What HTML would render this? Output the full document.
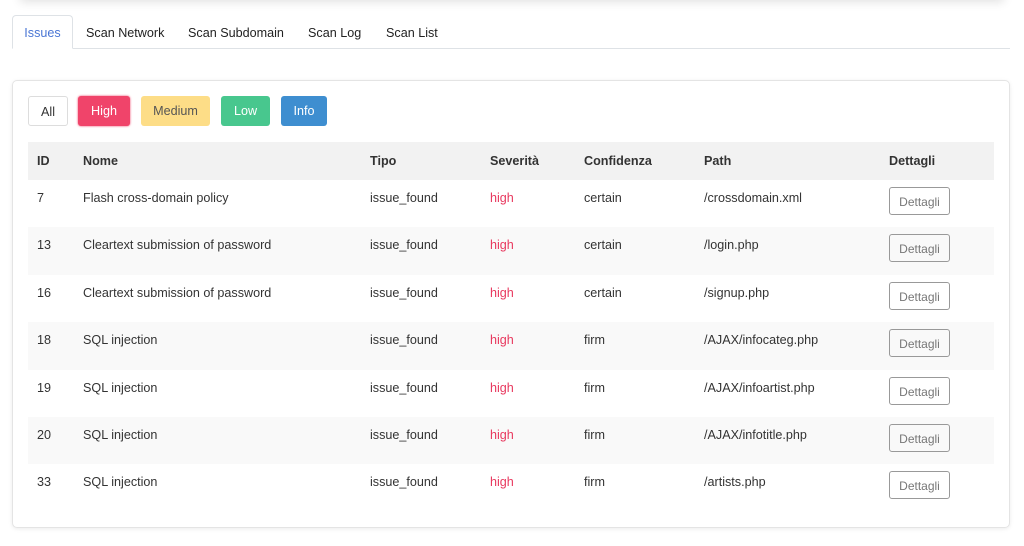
<!DOCTYPE html>
<html><head><meta charset="utf-8"><style>
body{margin:0;width:1024px;height:546px;background:#fff;font-family:"Liberation Sans",Arial,sans-serif;font-size:12.6px;color:#333;position:relative;overflow:hidden}
.topsh{position:absolute;left:20px;right:20px;top:-20px;height:20px;box-shadow:0 2px 10px rgba(0,0,0,.12)}
.tabs{position:absolute;left:12px;top:16px;width:998px;height:32px;border-bottom:1px solid #dee2e6}
.tab{position:absolute;top:1px;height:32px;line-height:32px;font-size:12.6px;color:#222}
.tab.act{left:0;width:59px;border:1px solid #dee2e6;border-bottom:1px solid #fff;border-radius:4px 4px 0 0;color:#4a76d4;text-align:center;background:#fff;height:32px;top:-1px;line-height:34px}
.card{position:absolute;left:12px;top:80px;width:996px;height:446px;border:1px solid #e4e4e4;border-radius:5px;box-shadow:0 1px 4px rgba(0,0,0,.08)}
.btn{position:absolute;top:15px;height:30px;line-height:30px;text-align:center;border-radius:3px;font-size:12.6px;box-sizing:border-box}
table{position:absolute;left:15px;top:61px;width:966px;border-collapse:collapse}
th{height:38px;background:#f2f2f2;text-align:left;font-weight:bold;padding:0;box-sizing:border-box;vertical-align:middle}
td{height:47.4px;padding:0;vertical-align:top;padding-top:11px;box-sizing:border-box}
tr.s td{background:#f9f9f9}
.h{color:#e8385e}
.d{display:inline-block;width:61px;height:28px;line-height:28px;text-align:center;border:1px solid #999;border-radius:3px;color:#777;margin-top:-4px;box-sizing:border-box;font-size:12px}
</style></head><body>
<div class="topsh"></div>
<div class="tabs">
<div class="tab act">Issues</div>
<div class="tab" style="left:74px">Scan Network</div>
<div class="tab" style="left:176px">Scan Subdomain</div>
<div class="tab" style="left:296px">Scan Log</div>
<div class="tab" style="left:374px">Scan List</div>
</div>
<div class="card">
<div class="btn" style="left:15px;width:40px;border:1px solid #ddd;color:#333">All</div>
<div class="btn" style="left:65px;width:52px;background:#f0446a;color:#fff;box-shadow:0 0 2px #f0446a">High</div>
<div class="btn" style="left:128px;width:69px;background:#fddd87;color:#555">Medium</div>
<div class="btn" style="left:208px;width:49px;background:#48c78e;color:#fff">Low</div>
<div class="btn" style="left:268px;width:46px;background:#3e8ed0;color:#fff">Info</div>
<table>
<colgroup><col style="width:55px"><col style="width:287px"><col style="width:120px"><col style="width:94px"><col style="width:120px"><col style="width:185px"><col></colgroup>
<tr><th style="padding-left:9px">ID</th><th>Nome</th><th>Tipo</th><th>Severità</th><th>Confidenza</th><th>Path</th><th>Dettagli</th></tr>
<tr><td style="padding-left:9px">7</td><td>Flash cross-domain policy</td><td>issue_found</td><td class="h">high</td><td>certain</td><td>/crossdomain.xml</td><td><span class="d">Dettagli</span></td></tr>
<tr class="s"><td style="padding-left:9px">13</td><td>Cleartext submission of password</td><td>issue_found</td><td class="h">high</td><td>certain</td><td>/login.php</td><td><span class="d">Dettagli</span></td></tr>
<tr><td style="padding-left:9px">16</td><td>Cleartext submission of password</td><td>issue_found</td><td class="h">high</td><td>certain</td><td>/signup.php</td><td><span class="d">Dettagli</span></td></tr>
<tr class="s"><td style="padding-left:9px">18</td><td>SQL injection</td><td>issue_found</td><td class="h">high</td><td>firm</td><td>/AJAX/infocateg.php</td><td><span class="d">Dettagli</span></td></tr>
<tr><td style="padding-left:9px">19</td><td>SQL injection</td><td>issue_found</td><td class="h">high</td><td>firm</td><td>/AJAX/infoartist.php</td><td><span class="d">Dettagli</span></td></tr>
<tr class="s"><td style="padding-left:9px">20</td><td>SQL injection</td><td>issue_found</td><td class="h">high</td><td>firm</td><td>/AJAX/infotitle.php</td><td><span class="d">Dettagli</span></td></tr>
<tr><td style="padding-left:9px">33</td><td>SQL injection</td><td>issue_found</td><td class="h">high</td><td>firm</td><td>/artists.php</td><td><span class="d">Dettagli</span></td></tr>
</table>
</div>
</body></html>
